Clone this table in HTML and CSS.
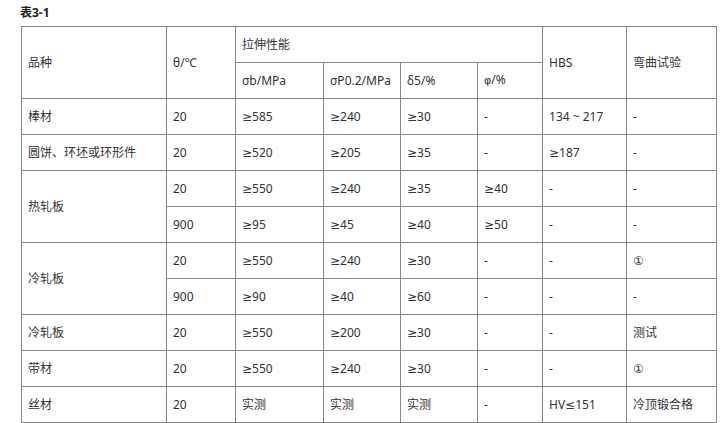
FILE: index.html
```html
<!DOCTYPE html>
<html lang="zh-CN">
<head>
<meta charset="utf-8">
<title>表3-1</title>
<link rel="stylesheet" href="styles.css">
</head>
<body>
<div class="wrap">
  <div class="caption">表3-1</div>
  <table class="spec">
    <colgroup>
      <col class="c1"><col class="c2"><col class="c3"><col class="c4"><col class="c5"><col class="c6"><col class="c7"><col class="c8">
    </colgroup>
    <tbody>
      <tr>
        <td rowspan="2">品种</td>
        <td rowspan="2">θ/℃</td>
        <td colspan="4">拉伸性能</td>
        <td rowspan="2">HBS</td>
        <td rowspan="2">弯曲试验</td>
      </tr>
      <tr>
        <td>σb/MPa</td>
        <td>σP0.2/MPa</td>
        <td>δ5/%</td>
        <td><span class="sym">φ</span>/%</td>
      </tr>
      <tr>
        <td>棒材</td><td>20</td><td>≥585</td><td>≥240</td><td>≥30</td><td>-</td><td>134 ~ 217</td><td>-</td>
      </tr>
      <tr>
        <td>圆饼、环坯或环形件</td><td>20</td><td>≥520</td><td>≥205</td><td>≥35</td><td>-</td><td>≥187</td><td>-</td>
      </tr>
      <tr>
        <td rowspan="2">热轧板</td><td>20</td><td>≥550</td><td>≥240</td><td>≥35</td><td>≥40</td><td>-</td><td>-</td>
      </tr>
      <tr>
        <td>900</td><td>≥95</td><td>≥45</td><td>≥40</td><td>≥50</td><td>-</td><td>-</td>
      </tr>
      <tr>
        <td rowspan="2">冷轧板</td><td>20</td><td>≥550</td><td>≥240</td><td>≥30</td><td>-</td><td>-</td><td>①</td>
      </tr>
      <tr>
        <td>900</td><td>≥90</td><td>≥40</td><td>≥60</td><td>-</td><td>-</td><td>-</td>
      </tr>
      <tr>
        <td>冷轧板</td><td>20</td><td>≥550</td><td>≥200</td><td>≥30</td><td>-</td><td>-</td><td>测试</td>
      </tr>
      <tr>
        <td>带材</td><td>20</td><td>≥550</td><td>≥240</td><td>≥30</td><td>-</td><td>-</td><td>①</td>
      </tr>
      <tr>
        <td>丝材</td><td>20</td><td>实测</td><td>实测</td><td>实测</td><td>-</td><td>HV≤151</td><td>冷顶锻合格</td>
      </tr>
    </tbody>
  </table>
</div>
</body>
</html>
```

FILE: styles.css
```css
html, body {
  margin: 0;
  padding: 0;
  background: #ffffff;
}

.wrap {
  padding: 5px 0 0 20px;
  font-family: "Noto Sans", "DejaVu Sans", "Noto Sans CJK SC", sans-serif;
  color: #333333;
  font-size: 12px;
}

.caption {
  font-weight: bold;
  color: #222222;
  font-size: 12px;
  line-height: 16px;
  height: 16px;
  margin-bottom: 5px;
}

.spec {
  border-collapse: collapse;
  table-layout: fixed;
  width: 695px;
  margin-left: 1px;
}

.spec td {
  border: 1px solid #888888;
  height: 35px;
  padding: 0 0 0 6px;
  vertical-align: middle;
  line-height: 16px;
  white-space: nowrap;
  overflow: hidden;
}

.sym {
  font-family: "DejaVu Sans", sans-serif;
  font-size: 11px;
}

.c1 { width: 145px; }
.c2 { width: 69px; }
.c3 { width: 88px; }
.c4 { width: 77px; }
.c5 { width: 77px; }
.c6 { width: 65px; }
.c7 { width: 84px; }
.c8 { width: 90px; }
```
